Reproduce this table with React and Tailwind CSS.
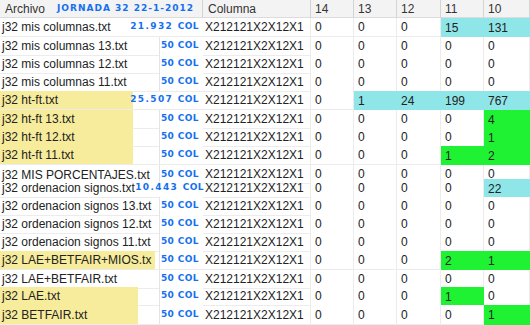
import React from "react";

const H = {
  14: "h-[14px]",
  17: "h-[17px]",
  18: "h-[18px]",
  19: "h-[19px]",
  20: "h-[20px]",
};

const C = { c: "bg-[#8fe6e8]", g: "bg-[#1ff232]", w: "bg-white" };

const rows = [
  { h: 19, name: "j32 mis columnas.txt", num: "21.932", big: "right-[4px]", v: [0, 0, 0, 15, 131], c: "wwwcc" },
  { h: 18, name: "j32 mis columnas 13.txt", v: [0, 0, 0, 0, 0], c: "wwwww" },
  { h: 18, name: "j32 mis columnas 12.txt", v: [0, 0, 0, 0, 0], c: "wwwww" },
  { h: 18, name: "j32 mis columnas 11.txt", v: [0, 0, 0, 0, 0], c: "wwwww" },
  { h: 19, name: "j32 ht-ft.txt", y: "w-[133px]", num: "25.507", big: "right-[4px]", v: [0, 1, 24, 199, 767], c: "wcccc" },
  { h: 18, name: "j32 ht-ft 13.txt", y: "w-[133px]", v: [0, 0, 0, 0, 4], c: "wwwwg" },
  { h: 18, name: "j32 ht-ft 12.txt", y: "w-[133px]", v: [0, 0, 0, 0, 1], c: "wwwwg" },
  { h: 19, name: "j32 ht-ft 11.txt", y: "w-[133px]", v: [0, 0, 0, 1, 2], c: "wwwgg" },
  { h: 14, name: "j32 MIS PORCENTAJES.txt", v: [0, 0, 0, 0, 0], c: "wwwww", nob: true },
  { h: 18, name: "j32 ordenacion signos.txt", num: "10.443", big: "right-[-1px]", v: [0, 0, 0, 0, 22], c: "wwwwc" },
  { h: 18, name: "j32 ordenacion signos 13.txt", v: [0, 0, 0, 0, 0], c: "wwwww" },
  { h: 18, name: "j32 ordenacion signos 12.txt", v: [0, 0, 0, 0, 0], c: "wwwww" },
  { h: 18, name: "j32 ordenacion signos 11.txt", v: [0, 0, 0, 0, 0], c: "wwwww" },
  { h: 19, name: "j32 LAE+BETFAIR+MIOS.tx", y: "w-[155px]", v: [0, 0, 0, 2, 1], c: "wwwgg" },
  { h: 17, name: "j32 LAE+BETFAIR.txt", v: [0, 0, 0, 0, 0], c: "wwwww" },
  { h: 18, name: "j32 LAE.txt", y: "w-[138px]", v: [0, 0, 0, 1, 0], c: "wwwgw" },
  { h: 20, name: "j32 BETFAIR.txt", y: "w-[138px]", v: [0, 0, 0, 0, 1], c: "wwwwg" },
];

const grid = "grid grid-cols-[203px_108px_43px_43px_44px_43px_46px]";
const font = { fontFamily: '"Liberation Sans", Arial, sans-serif' };
const labelFont = { fontFamily: '"DejaVu Sans", Verdana, sans-serif' };

export default function App() {
  return (
    <div className="w-[530px] h-[325px] overflow-hidden bg-white text-[12px] text-[#222]" style={font}>
      <div className={`${grid} h-[18px] bg-[#f3f3f3] border-b border-[#dcdcdc]`}>
        <div className="flex items-center border-r border-[#d4d4d4] pl-[5px]">
          <span className="text-[#333]">Archivo</span>
          <span
            className="ml-[12px] text-[9px] font-bold text-[#1570ef] tracking-[1px]"
            style={labelFont}
          >
            JORNADA 32 22-1-2012
          </span>
        </div>
        <div className="flex items-center border-r border-[#d4d4d4] pl-[5px] text-[#333]">Columna</div>
        {["14", "13", "12", "11", "10"].map((t) => (
          <div key={t} className="flex items-center border-r border-[#d4d4d4] pl-[4px] text-[#333]">
            {t}
          </div>
        ))}
      </div>
      {rows.map((r, i) => (
        <div key={i} className={`${grid} ${H[r.h]}`}>
          <div className={`flex items-center relative ${r.nob ? "" : "border-b border-[#ececec]"}`}>
            <div
              className={`h-full flex items-center pl-[2px] whitespace-nowrap ${
                r.y ? `${r.y} bg-[#f6ec9c]` : "flex-1"
              }`}
            >
              {r.name}
            </div>
            {r.big ? (
              <div
                className={`absolute ${r.big} top-0 h-full flex items-center text-[9px] font-bold text-[#1570ef] whitespace-pre`}
                style={labelFont}
              >
                <span className="tracking-[1.4px]">{r.num + " "}</span>
                <span className="tracking-[0.4px]">COL</span>
              </div>
            ) : (
              <div
                className="absolute right-0 top-0 h-full w-[44px] bg-white border-l border-[#e4e4e4] flex items-center justify-end pr-[4px] text-[9px] font-bold text-[#1570ef] tracking-[0.4px] whitespace-nowrap"
                style={labelFont}
              >
                50 COL
              </div>
            )}
          </div>
          <div className="flex items-center pl-[2px] whitespace-nowrap border-r border-b border-[#ececec]">
            X212121X2X12X1
          </div>
          {r.v.map((n, j) => (
            <div
              key={j}
              className={`flex items-center pl-[4px] ${C[r.c[j]]} ${
                r.c[j] === "w" ? "border-r border-b border-[#ececec]" : ""
              }`}
            >
              {n}
            </div>
          ))}
        </div>
      ))}
    </div>
  );
}
